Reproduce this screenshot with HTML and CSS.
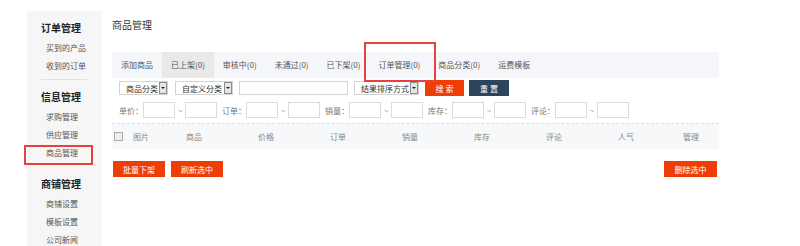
FILE: index.html
```html
<!DOCTYPE html>
<html lang="zh-CN">
<head>
    <meta charset="UTF-8">
    <title>商品管理</title>
    <link rel="stylesheet" href="styles.css">
</head>
<body>
    <div class="page">
        <div class="sidebar">
            <div class="side-group">
                <div class="side-title">订单管理</div>
                <div class="side-item">买到的产品</div>
                <div class="side-item">收到的订单</div>
            </div>
            <div class="side-line"></div>
            <div class="side-group">
                <div class="side-title">信息管理</div>
                <div class="side-item">求购管理</div>
                <div class="side-item">供应管理</div>
                <div class="side-item marked">商品管理</div>
            </div>
            <div class="side-group last">
                <div class="side-title">商铺管理</div>
                <div class="side-item">商铺设置</div>
                <div class="side-item">模板设置</div>
                <div class="side-item">公司新闻</div>
            </div>
        </div>

        <div class="main">
            <div class="page-title">商品管理</div>

            <div class="tabs">
                <span class="tab">添加商品</span>
                <span class="tab active">已上架(0)</span>
                <span class="tab">审核中(0)</span>
                <span class="tab">未通过(0)</span>
                <span class="tab">已下架(0)</span>
                <span class="tab marked">订单管理(0)</span>
                <span class="tab">商品分类(0)</span>
                <span class="tab">运费模板</span>
            </div>

            <div class="search-row">
                <div class="select w49"><span>商品分类</span><i class="arrow"></i></div>
                <div class="select w58"><span>自定义分类</span><i class="arrow"></i></div>
                <input class="keyword" type="text">
                <div class="select w65"><span>结果排序方式</span><i class="arrow"></i></div>
                <button class="btn btn-search">搜 索</button>
                <button class="btn btn-reset">重 置</button>
            </div>

            <div class="filter-row">
                <span class="label">单价：</span><input class="num" type="text"><span class="tilde">~</span><input class="num last" type="text">
                <span class="label">订单：</span><input class="num" type="text"><span class="tilde">~</span><input class="num last" type="text">
                <span class="label">销量：</span><input class="num" type="text"><span class="tilde">~</span><input class="num last" type="text">
                <span class="label">库存：</span><input class="num" type="text"><span class="tilde">~</span><input class="num last" type="text">
                <span class="label">评论：</span><input class="num" type="text"><span class="tilde">~</span><input class="num last" type="text">
            </div>

            <div class="table-head">
                <span class="check"><i class="box"></i></span>
                <span>图片</span>
                <span>商品</span>
                <span>价格</span>
                <span>订单</span>
                <span>销量</span>
                <span>库存</span>
                <span>评论</span>
                <span>人气</span>
                <span>管理</span>
            </div>

            <div class="actions">
                <button class="btn btn-red">批量下架</button>
                <button class="btn btn-red">刷新选中</button>
                <button class="btn btn-red right">删除选中</button>
            </div>
        </div>
    </div>
</body>
</html>
```

FILE: styles.css
```css
body {
    margin: 0;
    background: #fff;
    font-family: "Noto Sans CJK SC", "Liberation Sans", sans-serif;
    color: #333;
}

.page {
    display: flex;
    height: 246px;
    overflow: hidden;
}

/* sidebar */
.sidebar {
    margin: 11px 0 0 27px;
    width: 75px;
    background: #f6f6f6;
    padding-top: 6px;
    box-sizing: border-box;
}

.side-title {
    height: 22px;
    line-height: 22px;
    padding-left: 14px;
    font-size: 10px;
    font-weight: bold;
    color: #222;
}

.side-item {
    position: relative;
    height: 18px;
    line-height: 18px;
    padding-left: 19px;
    font-size: 8px;
    color: #555;
}

.side-item.marked::after {
    content: "";
    position: absolute;
    left: -3px;
    top: 1px;
    width: 65px;
    height: 16px;
    border: 2px solid #e8403f;
}

.side-line {
    height: 1px;
    margin: 4px 15px 6px 14px;
    background: #e2e2e2;
}

.side-group + .side-group {
    margin-top: 11px;
}

/* main */
.main {
    margin-left: 10px;
    width: 607px;
}

.page-title {
    margin-top: 18px;
    line-height: 14px;
    font-size: 10px;
    color: #333;
}

.tabs {
    display: flex;
    margin-top: 20px;
    height: 26px;
    background: #f5f6f9;
}

.tab {
    position: relative;
    padding: 0 9px;
    line-height: 26px;
    font-size: 8px;
    color: #555;
    white-space: nowrap;
}

.tab.active {
    background: #e9e9e9;
}

.tab.marked::after {
    content: "";
    position: absolute;
    left: -5px;
    right: -7px;
    top: -10px;
    bottom: -4px;
    border: 2px solid #e8403f;
}

.search-row {
    display: flex;
    align-items: center;
    gap: 6px;
    margin-top: 2px;
    padding-left: 7px;
    height: 16px;
}

.select {
    display: flex;
    align-items: center;
    justify-content: space-between;
    height: 14px;
    box-sizing: border-box;
    border: 1px solid #d4d4d4;
    padding-left: 6px;
    font-size: 8px;
    color: #333;
    background: #fff;
    white-space: nowrap;
}

.w49 { width: 49px; }
.w58 { width: 58px; margin-left: 1px; }
.w65 { width: 65px; }

.arrow {
    position: relative;
    flex: none;
    width: 8px;
    height: 12px;
    box-sizing: border-box;
    border: 1px solid #8d8d8d;
    background: #e6e6e6;
}

.arrow::after {
    content: "";
    position: absolute;
    left: 1px;
    top: 4px;
    border-left: 2px solid transparent;
    border-right: 2px solid transparent;
    border-top: 2px solid #222;
}

.keyword {
    width: 109px;
    height: 14px;
    box-sizing: border-box;
    border: 1px solid #d4d4d4;
    margin: 0;
    padding: 0;
}

.btn {
    border: none;
    margin: 0;
    padding: 0;
    height: 16px;
    font-family: inherit;
    font-size: 8px;
    color: #fff;
    cursor: pointer;
}

.btn-search {
    width: 39px;
    background: #ef3d06;
}

.btn-reset {
    width: 40px;
    margin-left: -1px;
    background: #2c445c;
}

.filter-row {
    display: flex;
    align-items: center;
    margin-top: 6px;
    padding-left: 7px;
    height: 16px;
    font-size: 8px;
    color: #777;
}

.label {
    width: 24px;
    white-space: nowrap;
}

.num {
    width: 32px;
    height: 16px;
    box-sizing: border-box;
    border: 1px solid #dcdcdc;
    margin: 0;
    padding: 0;
}

.num.last {
    margin-right: 5px;
}

.tilde {
    width: 10px;
    text-align: center;
    color: #999;
}

.table-head {
    display: grid;
    grid-template-columns: 21px 53px repeat(6, 72px) 65px 1fr;
    align-items: center;
    margin-top: 5px;
    height: 26px;
    box-sizing: border-box;
    border-top: 1px dashed #dedede;
    background: #f7f8fa;
    font-size: 8px;
    color: #888;
}

.check {
    padding-left: 2px;
}

.box {
    display: block;
    width: 7px;
    height: 7px;
    border: 1px solid #aaa;
    background: #eee;
}

.actions {
    display: flex;
    gap: 6px;
    margin-top: 12px;
    padding-left: 1px;
    padding-right: 2px;
}

.btn-red {
    width: 52px;
    background: #ef3d06;
}

.btn-red.right {
    margin-left: auto;
    width: 53px;
}
```
